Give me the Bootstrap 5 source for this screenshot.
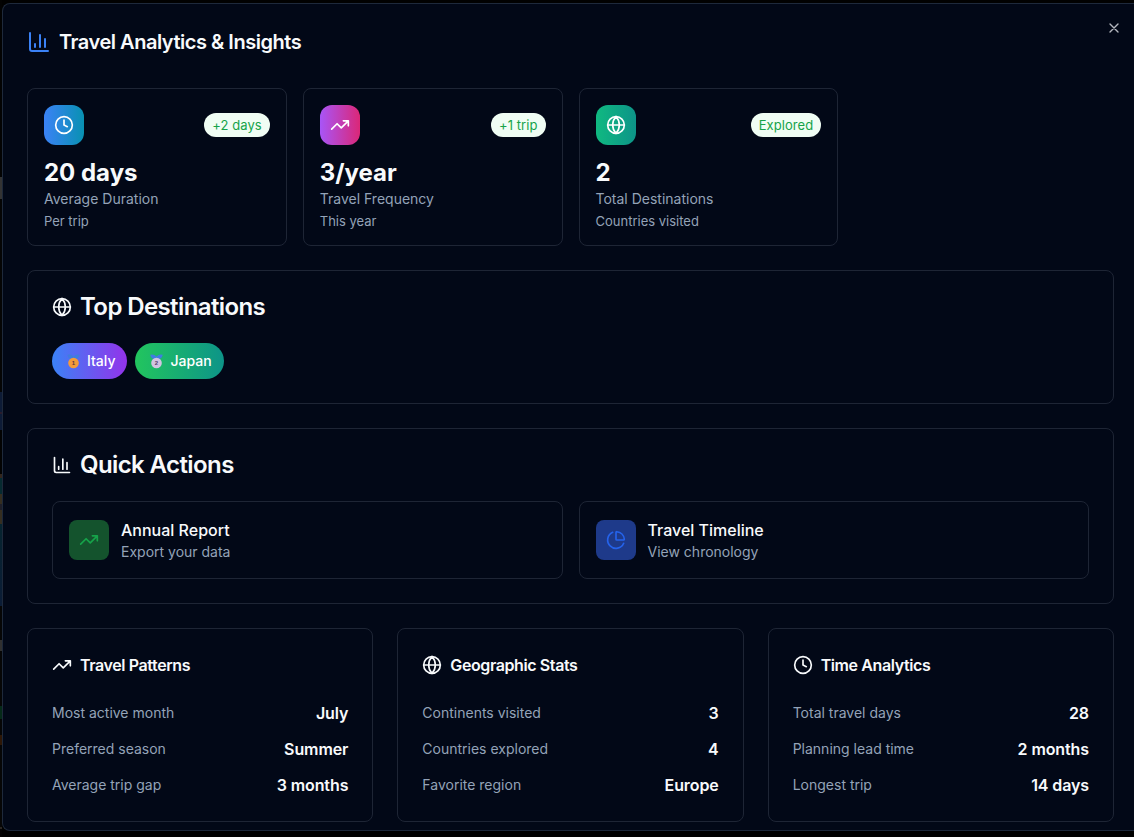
<!DOCTYPE html>
<html lang="en">
<head>
<meta charset="utf-8">
<meta name="viewport" content="width=device-width, initial-scale=1">
<title>Travel Analytics &amp; Insights</title>
<link href="https://cdn.jsdelivr.net/npm/bootstrap@5.3.0/dist/css/bootstrap.min.css" rel="stylesheet">
<style>
  :root { --line: #1e2535; --ink: #f8fafc; --muted: #94a3b8; }
  body {
    height: 837px; overflow: hidden; font-family: Inter, sans-serif; color: var(--ink);
    background: #010101 linear-gradient(#030303 0 177px, #333 177px 199px, #050505 199px 392px, #0d1b36 392px 412px, #2a1c2c 412px 414px, #0d1b36 414px 430px, #030303 430px 474px, #33261d 474px 478px, #062a30 478px 494px, #352e20 494px 504px, #1e1e28 504px 510px, #352e20 510px 524px, #06242f 524px, #0b1c36 606px, #060606 606px 640px, #303030 640px 651px, #060606 651px 706px, #052a18 706px 719px, #060606 719px 735px, #2e1706 735px 745px, #060606 745px 827px, #2b2622 827px 829px, #040303 829px) 0 0 / 2px 837px no-repeat;
    padding: 3px 0 0 2px;
  }
  .panel { height: 828px; background: #020817; border: 1px solid #1e293b; border-right: 0; border-radius: 8px 0 0 8px; padding: 24px 20px 8px 24px; }
  .box { border: 1px solid var(--line); border-radius: 8px; }
  .stat-grid { display: grid; grid-template-columns: repeat(4, 1fr); gap: 16px; }
  .info-grid { display: grid; grid-template-columns: repeat(3, 1fr); gap: 24px; }
  .action-grid { display: grid; grid-template-columns: repeat(2, 1fr); gap: 16px; }
  .pad { padding: 24px; }
  svg { fill: none; stroke: currentColor; stroke-width: 2; stroke-linecap: round; stroke-linejoin: round; flex: none; }
  .i24 { width: 24px; height: 24px; } .i20 { width: 20px; height: 20px; }
  .page-title { font-size: 20px; line-height: 28px; font-weight: 600; letter-spacing: -.48px; }
  .section-title { font-size: 24px; line-height: 24px; font-weight: 600; letter-spacing: -.6px; }
  .info-title { font-size: 16px; line-height: 24px; font-weight: 600; letter-spacing: -.4px; }
  .tile { width: 40px; height: 40px; border-radius: 12px; color: #fff; }
  .tile-sm { border-radius: 8px; }
  .g-blue { background: linear-gradient(90deg, #3b82f6, #0891b2); }
  .g-pink { background: linear-gradient(90deg, #a855f7, #db2777); }
  .g-teal { background: linear-gradient(90deg, #10b981, #0d9488); }
  .t-green { background: #14532d; color: #16a34a; }
  .t-blue { background: #1e3a8a; color: #2563eb; }
  .chip { background: #f0fdf4; color: #16a34a; font-size: 13px; line-height: 24px; border-radius: 12px; padding: 0 8px; letter-spacing: .07px; }
  .stat-value { font-size: 24px; line-height: 32px; font-weight: 700; margin-top: 12px; }
  .t14 { font-size: 14px; line-height: 20px; color: var(--muted); }
  .t13 { font-size: 13px; line-height: 16px; color: var(--muted); margin-top: 4px; }
  .pill { height: 36px; border-radius: 18px; padding: 0 12px 1px; color: #fff; font-size: 14px; font-weight: 500; }
  .p-italy { background: linear-gradient(90deg, #3b82f6, #9333ea); }
  .p-japan { background: linear-gradient(90deg, #22c55e, #0d9488); }
  .medal { width: 13px; height: 15px; stroke: none; margin: 1px 7px 0 3px; }
  .medal text { font: 700 6px "Liberation Sans", sans-serif; }
  .line16 { font-size: 16px; line-height: 24px; font-weight: 500; }
  .line16.val { font-weight: 600; letter-spacing: -.1px; }
  .close-x { position: absolute; left: 1106px; top: 20px; width: 16px; height: 16px; color: #b4b8bf; }
</style>
</head>
<body>
<svg class="d-none">
  <symbol id="chart" viewBox="0 0 24 24"><path d="M3 3v16a2 2 0 0 0 2 2h16M18 17V9M13 17V5M8 17v-3"/></symbol>
  <symbol id="clock" viewBox="0 0 24 24"><circle cx="12" cy="12" r="10"/><path d="M12 6v6l4 2"/></symbol>
  <symbol id="trend" viewBox="0 0 24 24"><path d="M22 7l-8.5 8.5-5-5L2 17M16 7h6v6"/></symbol>
  <symbol id="globe" viewBox="0 0 24 24"><circle cx="12" cy="12" r="10"/><path d="M12 2a14.5 14.5 0 0 0 0 20 14.5 14.5 0 0 0 0-20M2 12h20"/></symbol>
  <symbol id="pie" viewBox="0 0 24 24"><path d="M21 12c.552 0 1.005-.449.95-.998a10 10 0 0 0-8.953-8.951c-.55-.055-.998.398-.998.95v8a1 1 0 0 0 1 1zM21.21 15.89A10 10 0 1 1 8 2.83"/></symbol>
</svg>
<main class="panel">
  <header class="d-flex align-items-center gap-2">
    <svg class="i24" style="color:#3b82f6"><use href="#chart"/></svg>
    <h1 class="page-title m-0">Travel Analytics &amp; Insights</h1>
  </header>
  <button class="close-x border-0 bg-transparent p-0 d-flex" aria-label="Close"><svg width="16" height="16" viewBox="0 0 24 24"><path d="M18 6L6 18M6 6l12 12"/></svg></button>

  <section class="stat-grid mb-4" style="margin-top:32px">
    <div class="box p-3">
      <div class="d-flex justify-content-between align-items-center">
        <div class="tile g-blue d-flex align-items-center justify-content-center"><svg class="i20"><use href="#clock"/></svg></div>
        <span class="chip">+2 days</span>
      </div>
      <div class="stat-value">20 days</div><div class="t14">Average Duration</div><div class="t13">Per trip</div>
    </div>
    <div class="box p-3">
      <div class="d-flex justify-content-between align-items-center">
        <div class="tile g-pink d-flex align-items-center justify-content-center"><svg class="i20"><use href="#trend"/></svg></div>
        <span class="chip">+1 trip</span>
      </div>
      <div class="stat-value">3/year</div><div class="t14">Travel Frequency</div><div class="t13">This year</div>
    </div>
    <div class="box p-3">
      <div class="d-flex justify-content-between align-items-center">
        <div class="tile g-teal d-flex align-items-center justify-content-center"><svg class="i20"><use href="#globe"/></svg></div>
        <span class="chip">Explored</span>
      </div>
      <div class="stat-value">2</div><div class="t14">Total Destinations</div><div class="t13">Countries visited</div>
    </div>
  </section>

  <section class="box pad mb-4">
    <div class="d-flex align-items-center gap-2 mb-4"><svg class="i20"><use href="#globe"/></svg><h2 class="section-title m-0">Top Destinations</h2></div>
    <div class="d-flex gap-2">
      <div class="pill p-italy d-flex align-items-center"><svg class="medal" viewBox="0 0 13 15"><path fill="#3f7de0" d="M.3 .8Q4-.3 6.5 2.6 9-.3 12.7.8 12 4.5 9 5H4Q1 4.5.3.8z"/><circle cx="6.5" cy="9" r="5.3" fill="#f59b3a"/><text x="6.5" y="11.2" text-anchor="middle" fill="#5b3440">1</text></svg>Italy</div>
      <div class="pill p-japan d-flex align-items-center"><svg class="medal" viewBox="0 0 13 15"><path fill="#3f7de0" d="M.3 .8Q4-.3 6.5 2.6 9-.3 12.7.8 12 4.5 9 5H4Q1 4.5.3.8z"/><circle cx="6.5" cy="9" r="5.3" fill="#d2c4e2"/><text x="6.5" y="11.2" text-anchor="middle" fill="#54406b">2</text></svg>Japan</div>
    </div>
  </section>

  <section class="box pad mb-4">
    <div class="d-flex align-items-center gap-2 mb-4"><svg class="i20"><use href="#chart"/></svg><h2 class="section-title m-0">Quick Actions</h2></div>
    <div class="action-grid">
      <div class="box p-3 d-flex align-items-center">
        <div class="tile tile-sm t-green d-flex align-items-center justify-content-center me-2"><svg class="i20"><use href="#trend"/></svg></div>
        <div class="ms-1"><div class="line16">Annual Report</div><div class="t14">Export your data</div></div>
      </div>
      <div class="box p-3 d-flex align-items-center">
        <div class="tile tile-sm t-blue d-flex align-items-center justify-content-center me-2"><svg class="i20"><use href="#pie"/></svg></div>
        <div class="ms-1"><div class="line16">Travel Timeline</div><div class="t14">View chronology</div></div>
      </div>
    </div>
  </section>

  <section class="info-grid">
    <div class="box pad">
      <div class="d-flex align-items-center gap-2 mb-4"><svg class="i20"><use href="#trend"/></svg><h3 class="info-title m-0">Travel Patterns</h3></div>
      <div class="d-grid" style="gap:12px">
        <div class="d-flex justify-content-between align-items-center"><span class="t14">Most active month</span><span class="line16 val">July</span></div>
        <div class="d-flex justify-content-between align-items-center"><span class="t14">Preferred season</span><span class="line16 val">Summer</span></div>
        <div class="d-flex justify-content-between align-items-center"><span class="t14">Average trip gap</span><span class="line16 val">3 months</span></div>
      </div>
    </div>
    <div class="box pad">
      <div class="d-flex align-items-center gap-2 mb-4"><svg class="i20"><use href="#globe"/></svg><h3 class="info-title m-0">Geographic Stats</h3></div>
      <div class="d-grid" style="gap:12px">
        <div class="d-flex justify-content-between align-items-center"><span class="t14">Continents visited</span><span class="line16 val">3</span></div>
        <div class="d-flex justify-content-between align-items-center"><span class="t14">Countries explored</span><span class="line16 val">4</span></div>
        <div class="d-flex justify-content-between align-items-center"><span class="t14">Favorite region</span><span class="line16 val">Europe</span></div>
      </div>
    </div>
    <div class="box pad">
      <div class="d-flex align-items-center gap-2 mb-4"><svg class="i20"><use href="#clock"/></svg><h3 class="info-title m-0">Time Analytics</h3></div>
      <div class="d-grid" style="gap:12px">
        <div class="d-flex justify-content-between align-items-center"><span class="t14">Total travel days</span><span class="line16 val">28</span></div>
        <div class="d-flex justify-content-between align-items-center"><span class="t14">Planning lead time</span><span class="line16 val">2 months</span></div>
        <div class="d-flex justify-content-between align-items-center"><span class="t14">Longest trip</span><span class="line16 val">14 days</span></div>
      </div>
    </div>
  </section>
</main>
<script src="https://cdn.jsdelivr.net/npm/bootstrap@5.3.0/dist/js/bootstrap.bundle.min.js"></script>
</body>
</html>
